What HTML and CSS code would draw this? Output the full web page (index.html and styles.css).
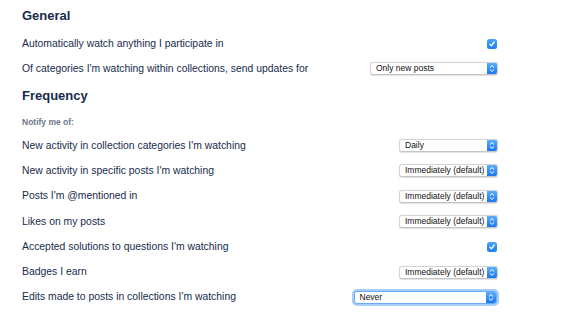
FILE: index.html
```html
<!DOCTYPE html>
<html lang="en">
<head>
<meta charset="utf-8">
<title>Notification settings</title>
<link rel="stylesheet" href="styles.css">
</head>
<body>
<main class="page">
  <h2 class="section-title">General</h2>
  <div class="row">
    <span class="label">Automatically watch anything I participate in</span>
    <span class="checkbox"><svg width="10" height="10" viewBox="0 0 10 10"><path d="M3 5.2 L4.4 6.8 L7.2 3" fill="none" stroke="#fff" stroke-width="1.3" stroke-linecap="round" stroke-linejoin="round"/></svg></span>
  </div>
  <div class="row">
    <span class="label">Of categories I'm watching within collections, send updates for</span>
    <div class="select w-128"><span class="select-value">Only new posts</span><span class="select-btn"><svg width="10" height="13" viewBox="0 0 10 13"><path d="M3.2 5.2 L5 3.6 L6.8 5.2 M3.2 7.8 L5 9.4 L6.8 7.8" fill="none" stroke="#fff" stroke-width="1" stroke-linecap="round" stroke-linejoin="round"/></svg></span></div>
  </div>

  <h2 class="section-title section-title--spaced">Frequency</h2>
  <p class="hint">Notify me of:</p>
  <div class="row row--freq">
    <span class="label">New activity in collection categories I'm watching</span>
    <div class="select w-99"><span class="select-value">Daily</span><span class="select-btn"><svg width="10" height="13" viewBox="0 0 10 13"><path d="M3.2 5.2 L5 3.6 L6.8 5.2 M3.2 7.8 L5 9.4 L6.8 7.8" fill="none" stroke="#fff" stroke-width="1" stroke-linecap="round" stroke-linejoin="round"/></svg></span></div>
  </div>
  <div class="row row--freq">
    <span class="label">New activity in specific posts I'm watching</span>
    <div class="select w-99"><span class="select-value">Immediately (default)</span><span class="select-btn"><svg width="10" height="13" viewBox="0 0 10 13"><path d="M3.2 5.2 L5 3.6 L6.8 5.2 M3.2 7.8 L5 9.4 L6.8 7.8" fill="none" stroke="#fff" stroke-width="1" stroke-linecap="round" stroke-linejoin="round"/></svg></span></div>
  </div>
  <div class="row row--freq">
    <span class="label">Posts I'm @mentioned in</span>
    <div class="select w-99"><span class="select-value">Immediately (default)</span><span class="select-btn"><svg width="10" height="13" viewBox="0 0 10 13"><path d="M3.2 5.2 L5 3.6 L6.8 5.2 M3.2 7.8 L5 9.4 L6.8 7.8" fill="none" stroke="#fff" stroke-width="1" stroke-linecap="round" stroke-linejoin="round"/></svg></span></div>
  </div>
  <div class="row row--freq">
    <span class="label">Likes on my posts</span>
    <div class="select w-99"><span class="select-value">Immediately (default)</span><span class="select-btn"><svg width="10" height="13" viewBox="0 0 10 13"><path d="M3.2 5.2 L5 3.6 L6.8 5.2 M3.2 7.8 L5 9.4 L6.8 7.8" fill="none" stroke="#fff" stroke-width="1" stroke-linecap="round" stroke-linejoin="round"/></svg></span></div>
  </div>
  <div class="row row--freq">
    <span class="label">Accepted solutions to questions I'm watching</span>
    <span class="checkbox"><svg width="10" height="10" viewBox="0 0 10 10"><path d="M3 5.2 L4.4 6.8 L7.2 3" fill="none" stroke="#fff" stroke-width="1.3" stroke-linecap="round" stroke-linejoin="round"/></svg></span>
  </div>
  <div class="row row--freq">
    <span class="label">Badges I earn</span>
    <div class="select w-99"><span class="select-value">Immediately (default)</span><span class="select-btn"><svg width="10" height="13" viewBox="0 0 10 13"><path d="M3.2 5.2 L5 3.6 L6.8 5.2 M3.2 7.8 L5 9.4 L6.8 7.8" fill="none" stroke="#fff" stroke-width="1" stroke-linecap="round" stroke-linejoin="round"/></svg></span></div>
  </div>
  <div class="row row--freq">
    <span class="label">Edits made to posts in collections I'm watching</span>
    <div class="select select--focus w-146"><span class="select-value">Never</span><span class="select-btn"><svg width="10" height="13" viewBox="0 0 10 13"><path d="M3.2 5.2 L5 3.6 L6.8 5.2 M3.2 7.8 L5 9.4 L6.8 7.8" fill="none" stroke="#fff" stroke-width="1" stroke-linecap="round" stroke-linejoin="round"/></svg></span></div>
  </div>
</main>
</body>
</html>
```
FILE: styles.css
```css
html, body {
  margin: 0;
  padding: 0;
  background: #ffffff;
}

body {
  font-family: "Liberation Sans", Arial, sans-serif;
  color: #172b4d;
}

.page {
  width: 476px;
  padding: 8px 0 0 22px;
}

.section-title {
  margin: 0 0 7px;
  font-size: 13px;
  line-height: 16px;
  font-weight: 700;
  color: #172b4d;
}

.section-title--spaced {
  margin: 7px 0 0;
}

.hint {
  margin: 13px 0 6px;
  font-size: 8.5px;
  line-height: 10px;
  font-weight: 700;
  color: #6b778c;
}

.row {
  height: 25px;
  display: flex;
  align-items: center;
  justify-content: space-between;
}

.row--freq {
  height: 25.3px;
}

.label {
  font-size: 10.4px;
  line-height: 14px;
  color: #172b4d;
}

.checkbox {
  width: 10px;
  height: 10px;
  margin-right: 1px;
  border-radius: 2.5px;
  background: linear-gradient(#4aa3fb, #1d7df5);
  display: flex;
}

.select {
  box-sizing: border-box;
  height: 13px;
  display: flex;
  background: #ffffff;
  border: 1px solid #d4d4d4;
  border-bottom-color: #c4c4c4;
  border-radius: 3px;
  box-shadow: 0 0.5px 1px rgba(0, 0, 0, 0.12);
  overflow: hidden;
}

.select--focus {
  border-color: #6aabf5;
  box-shadow: 0 0 0 2px #a6cdf9;
}

.w-128 { width: 128px; }
.w-99 { width: 99px; }
.w-146 { width: 143px; margin-right: 1.5px; }

.select-value {
  flex: 1;
  padding-left: 5px;
  font-size: 8.5px;
  line-height: 11px;
  color: #111111;
  white-space: nowrap;
}

.select-btn {
  width: 10px;
  display: flex;
  align-items: center;
  justify-content: center;
  background: linear-gradient(#5aaefc, #1a76f1);
}
```
